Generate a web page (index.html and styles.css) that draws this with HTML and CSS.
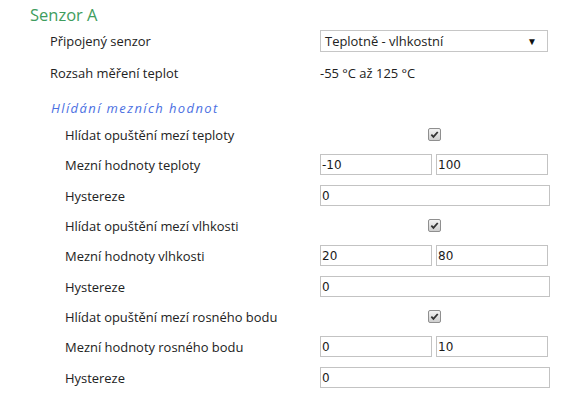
FILE: index.html
```html
<!DOCTYPE html>
<html lang="cs">
<head>
  <meta charset="UTF-8">
  <meta name="viewport" content="width=device-width, initial-scale=1.0">
  <title>Senzor A</title>
  <link rel="stylesheet" href="styles.css">
</head>
<body>
  <div class="section">
    <h2 class="title">Senzor A</h2>

    <div class="row row-tall">
      <div class="label">Připojený senzor</div>
      <div class="field">
        <div class="select">Teplotně - vlhkostní<span class="arrow">&#9660;</span></div>
      </div>
    </div>

    <div class="row row-tall">
      <div class="label">Rozsah měření teplot</div>
      <div class="field">-55 °C až 125 °C</div>
    </div>

    <h3 class="subtitle">Hlídání mezních hodnot</h3>

    <div class="group">
      <div class="row row-check">
        <div class="label">Hlídat opuštění mezí teploty</div>
        <div class="field center"><span class="check"><svg viewBox="0 0 10 10" width="9" height="9"><path d="M1.5 5.2 L3.8 7.6 L8.6 2.2" fill="none" stroke="#333" stroke-width="2"/></svg></span></div>
      </div>
      <div class="row">
        <div class="label">Mezní hodnoty teploty</div>
        <div class="field pair"><input class="input" type="text" value="-10"><input class="input" type="text" value="100"></div>
      </div>
      <div class="row">
        <div class="label">Hystereze</div>
        <div class="field"><input class="input wide" type="text" value="0"></div>
      </div>

      <div class="row row-check">
        <div class="label">Hlídat opuštění mezí vlhkosti</div>
        <div class="field center"><span class="check"><svg viewBox="0 0 10 10" width="9" height="9"><path d="M1.5 5.2 L3.8 7.6 L8.6 2.2" fill="none" stroke="#333" stroke-width="2"/></svg></span></div>
      </div>
      <div class="row">
        <div class="label">Mezní hodnoty vlhkosti</div>
        <div class="field pair"><input class="input" type="text" value="20"><input class="input" type="text" value="80"></div>
      </div>
      <div class="row">
        <div class="label">Hystereze</div>
        <div class="field"><input class="input wide" type="text" value="0"></div>
      </div>

      <div class="row row-check">
        <div class="label">Hlídat opuštění mezí rosného bodu</div>
        <div class="field center"><span class="check"><svg viewBox="0 0 10 10" width="9" height="9"><path d="M1.5 5.2 L3.8 7.6 L8.6 2.2" fill="none" stroke="#333" stroke-width="2"/></svg></span></div>
      </div>
      <div class="row">
        <div class="label">Mezní hodnoty rosného bodu</div>
        <div class="field pair"><input class="input" type="text" value="0"><input class="input" type="text" value="10"></div>
      </div>
      <div class="row">
        <div class="label">Hystereze</div>
        <div class="field"><input class="input wide" type="text" value="0"></div>
      </div>
    </div>
  </div>
</body>
</html>
```

FILE: styles.css
```css
body {
  font-family: "Open Sans", Arial, sans-serif;
  font-size: 12.95px;
  color: #222;
  margin: 0;
  padding: 0;
  background-color: #fff;
}
.section {
  padding-left: 30px;
}
.title {
  margin: 0;
  padding-top: 5px;
  font-size: 16.5px;
  font-weight: normal;
  line-height: 20px;
  color: #3f9d5e;
}
.row {
  display: flex;
  align-items: center;
  height: 31px;
  padding-left: 20px;
}
.row-tall {
  height: 32px;
}
.row-check {
  height: 29px;
}
.group .row {
  padding-left: 35px;
}
.label {
  flex: none;
}
.section > .row .label {
  width: 270px;
}
.group .row .label {
  width: 255px;
}
.field {
  width: 230px;
}
.field.center {
  width: 228px;
  display: flex;
  justify-content: center;
}
.field.pair {
  display: flex;
  gap: 4px;
  width: 228px;
}
.subtitle {
  margin: 0;
  padding: 10px 0 3px 21px;
  font-size: 13px;
  font-style: italic;
  font-weight: normal;
  letter-spacing: 1.4px;
  line-height: 18px;
  color: #4b6fe2;
}
.select {
  position: relative;
  box-sizing: border-box;
  width: 228px;
  height: 22px;
  line-height: 20px;
  padding-left: 4px;
  border: 1px solid #c6c6c6;
  background: #fff;
}
.arrow {
  position: absolute;
  right: 10px;
  top: 0;
  font-size: 10px;
  color: #111;
}
.input {
  box-sizing: border-box;
  width: 112px;
  height: 21px;
  margin: 0;
  padding: 0 1px;
  border: 1px solid #c3c3c3;
  font-family: "DejaVu Sans", Verdana, sans-serif;
  font-size: 12px;
  color: #1a1a1a;
  outline: none;
}
.input.wide {
  width: 230px;
}
.check {
  box-sizing: border-box;
  display: flex;
  align-items: center;
  justify-content: center;
  width: 13px;
  height: 13px;
  border: 1px solid #8f8f8f;
  border-radius: 2px;
  background: linear-gradient(#f2f2f2, #cfcfcf);
}
```
